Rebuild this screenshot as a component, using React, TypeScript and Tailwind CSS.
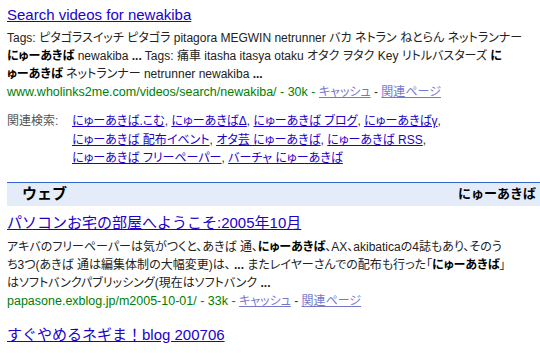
import React from "react"

const font = { fontFamily: '"Liberation Sans", Arial, "Noto Sans CJK JP", sans-serif' }

function Kw({ children }: { children: React.ReactNode }) {
  return <b className="font-bold text-black">{children}</b>
}

function Rel({ children, last }: { children: React.ReactNode; last?: boolean }) {
  return (
    <>
      <a href="#" className="text-[#2200cc] underline">{children}</a>
      {!last && <span className="text-[#333]">, </span>}
    </>
  )
}

function UrlLine({ url }: { url: string }) {
  return (
    <div>
      <span className="text-[12.5px] text-[#008000]">{url}</span>
      <a href="#" className="text-[#7777cc] underline">キャッシュ</a>
      <span className="text-[#333]"> - </span>
      <a href="#" className="text-[#7777cc] underline">関連ページ</a>
    </div>
  )
}

export default function App() {
  return (
    <div className="w-[540px] h-[353px] overflow-hidden bg-white text-[#222] pt-[4px]" style={font}>
      <div className="pl-[7px]">
        <a href="#" className="block text-[15px] leading-[22px] text-[#2200cc] underline">
          Search videos for newakiba
        </a>
        <div className="mt-[3px] text-[12px] leading-[18px] whitespace-nowrap [font-feature-settings:'palt']">
          <div>Tags: ピタゴラスイッチ ピタゴラ pitagora MEGWIN netrunner バカ ネトラン ねとらん ネットランナー</div>
          <div>
            <Kw>にゅーあきば</Kw> newakiba <b>...</b> Tags: 痛車 itasha itasya otaku オタク ヲタク Key リトルバスターズ <Kw>に</Kw>
          </div>
          <div>
            <Kw>ゅーあきば</Kw> ネットランナー netrunner newakiba <b>...</b>
          </div>
          <UrlLine url="www.wholinks2me.com/videos/search/newakiba/ - 30k - " />
        </div>

        <div className="mt-[11px] flex text-[12px] leading-[18.5px] [font-feature-settings:'palt']">
          <div className="w-[65px] shrink-0 text-[#555]">関連検索:</div>
          <div className="whitespace-nowrap">
            <div>
              <Rel>にゅーあきば.こむ</Rel>
              <Rel>にゅーあきばΔ</Rel>
              <Rel>にゅーあきば ブログ</Rel>
              <Rel>にゅーあきばγ</Rel>
            </div>
            <div>
              <Rel>にゅーあきば 配布イベント</Rel>
              <Rel>オタ芸 にゅーあきば</Rel>
              <Rel>にゅーあきば RSS</Rel>
            </div>
            <div>
              <Rel>にゅーあきば フリーペーパー</Rel>
              <Rel last>バーチャ にゅーあきば</Rel>
            </div>
          </div>
        </div>
      </div>

      <div className="ml-[7px] mt-[14px] h-[24px] border-t border-[#3366cc] bg-[#e5ecf9] flex items-center justify-between pl-[15px] pr-[4px]">
        <span className="text-[15px] font-bold text-black">ウェブ</span>
        <span className="text-[13px] font-bold text-black">にゅーあきば</span>
      </div>

      <div className="pl-[7px]">
        <a href="#" className="block mt-[6px] text-[15px] leading-[22px] text-[#2200cc] underline">
          パソコンお宅の部屋へようこそ:2005年10月
        </a>
        <div className="mt-[4px] text-[12px] leading-[18px] whitespace-nowrap [font-feature-settings:'palt']">
          <div>
            アキバのフリーペーパーは気がつくと、あきば 通、<Kw>にゅーあきば</Kw>、AX、akibaticaの4誌もあり、そのう
          </div>
          <div>
            ち3つ(あきば 通は編集体制の大幅変更)は、 <b>...</b> またレイヤーさんでの配布も行った「<Kw>にゅーあきば</Kw>」
          </div>
          <div>はソフトバンクパブリッシング(現在はソフトバンク <b>...</b></div>
          <UrlLine url="papasone.exblog.jp/m2005-10-01/ - 33k - " />
        </div>
        <a href="#" className="block mt-[14px] text-[15px] leading-[22px] text-[#2200cc] underline">
          すぐやめるネギま！blog 200706
        </a>
      </div>
    </div>
  )
}
